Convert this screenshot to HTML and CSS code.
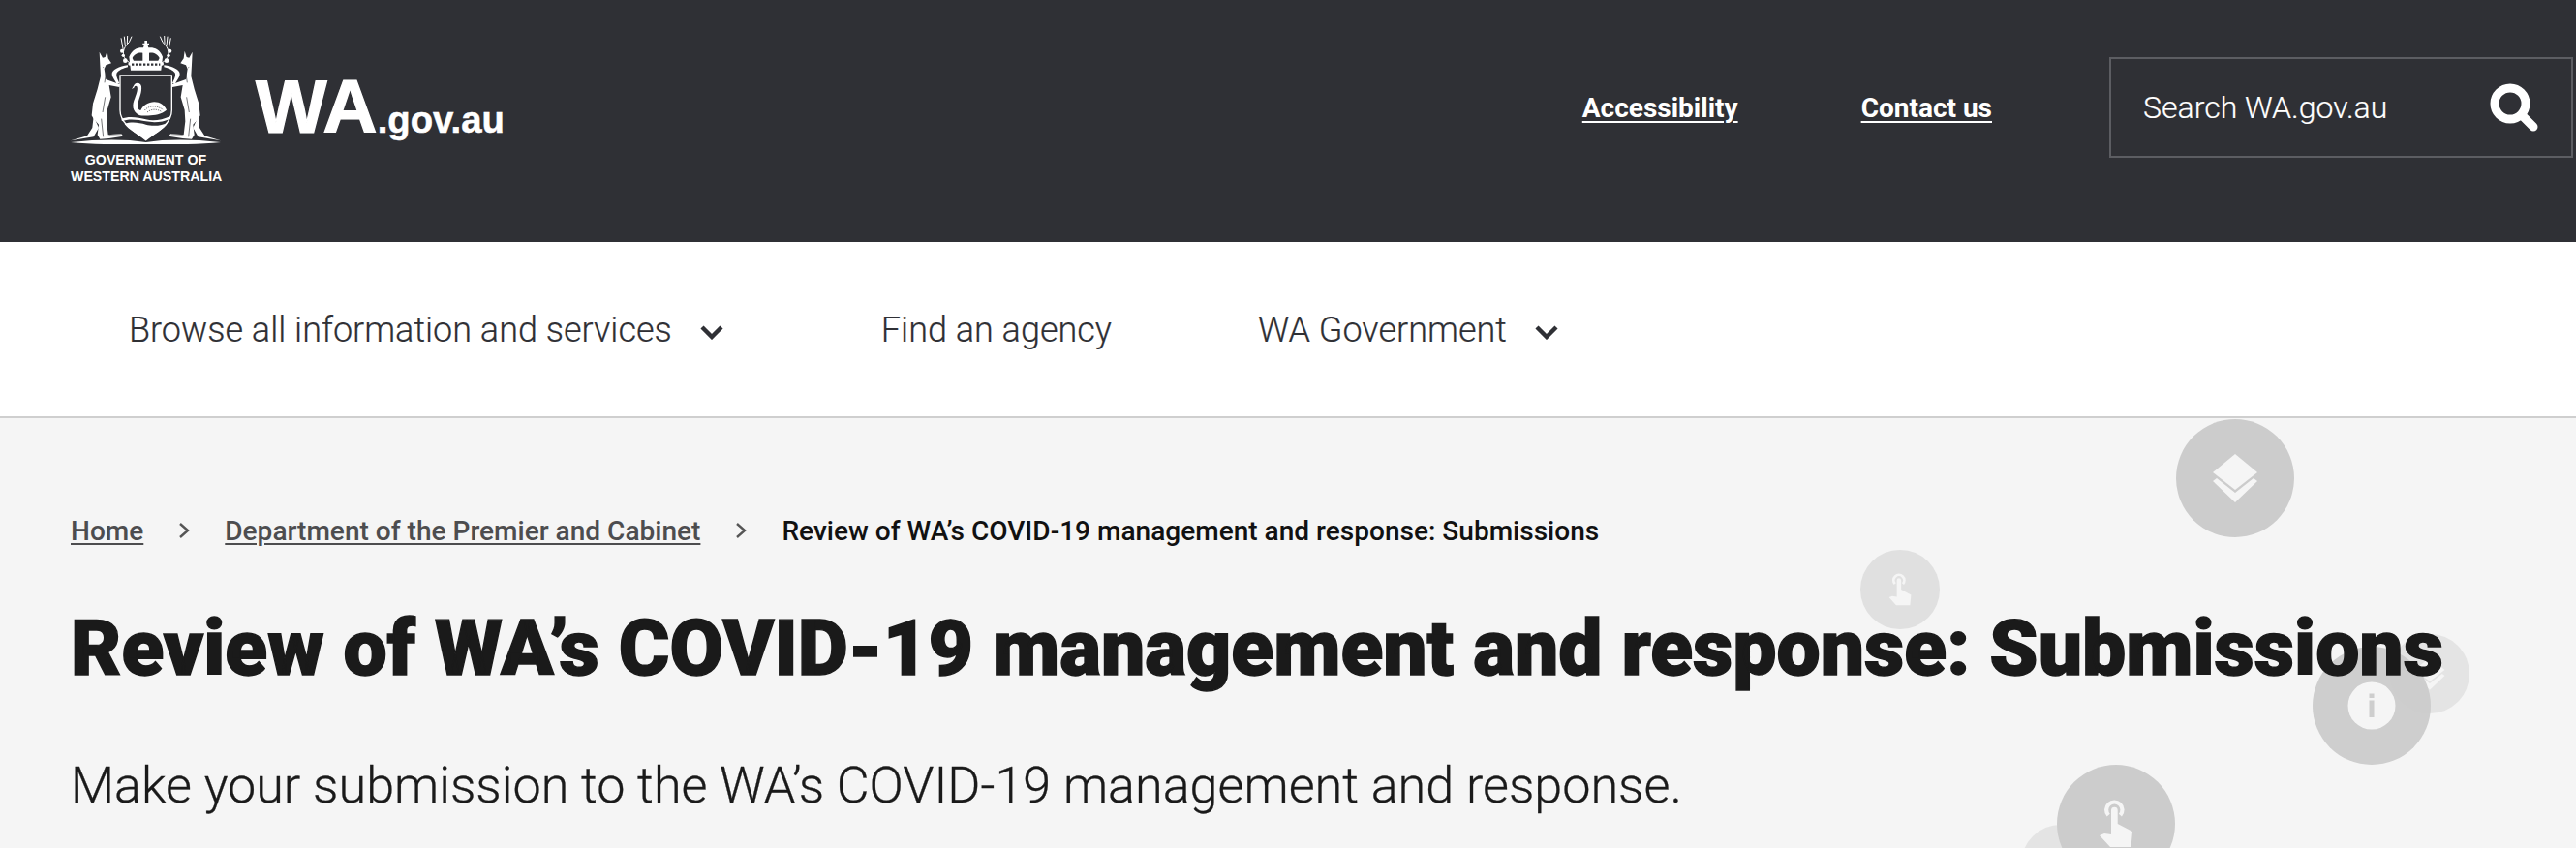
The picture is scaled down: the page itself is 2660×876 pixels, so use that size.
FILE: index.html
```html
<!DOCTYPE html>
<html lang="en">
<head>
<meta charset="utf-8">
<title>Review of WA's COVID-19 management and response: Submissions</title>
<link rel="stylesheet" href="styles.css">
</head>
<body>
<header class="masthead">
  <a class="brand" href="#">
    <span class="crest">
      <svg class="crest-art" viewBox="9 15 465 336" aria-hidden="true">
        <defs>
          <g id="roo">
            <path d="M98 65L108 83 116 81 122 62 125 85 135 100 118 106 113 118 118 150 162 166 160 174 128 168 134 205 122 245 120 280 125 322 165 318 172 326 128 333 100 335 92 322 96 290 80 272 74 262 78 225 92 180 102 140 100 105z" fill="#fff"/>
            <path d="M80 265L96 300 80 328 8 340 60 325 76 300z" fill="#fff"/>
            <path d="M186 106C160 110 135 120 137 135 138 145 148 155 152 165L160 162C155 150 148 140 152 130 158 122 172 115 186 112z" fill="#fff"/>
            <path d="M104 272L110 328M116 205L108 252M120 120L114 160" stroke="#2f3035" stroke-width="2" fill="none"/>
            <path d="M128 322L165 320M108 112l4 2" stroke="#2f3035" stroke-width="1.500" fill="none"/>
          </g>
          <g id="antler">
            <path d="M202 102C168 92 162 60 190 35M172 60L165 22M178 47L175 17M184 40L185 13M190 35L198 17" stroke="#fff" stroke-width="3" fill="none"/>
            <circle cx="168" cy="62" r="6" fill="#fff"/>
            <circle cx="172" cy="76" r="5" fill="#fff"/>
            <circle cx="178" cy="92" r="7" fill="#fff"/>
            <circle cx="192" cy="102" r="5" fill="#fff"/>
          </g>
        </defs>
        <path d="M9 345C100 335 180 335 242 345 304 335 384 335 475 345 400 352 300 353 242 352 180 353 84 352 9 345z" fill="#fff"/>
        <use href="#roo"/>
        <use href="#roo" transform="matrix(-1 0 0 1 484 0)"/>
        <use href="#antler"/>
        <use href="#antler" transform="matrix(-1 0 0 1 484 0)"/>
        <path d="M195 122L190 80C200 55 220 50 234 52L236 45H232V38H238V30H246V38H252V45H248L250 52C265 50 285 55 294 80L289 122z" fill="#fff"/>
        <path d="M200 84C205 70 222 65 232 68V92H204zM284 84C279 70 262 65 252 68V92H280z" fill="#2f3035"/>
        <path d="M198 104H286" stroke="#2f3035" stroke-width="7" stroke-dasharray="7 5" fill="none"/>
        <path d="M162 138H322V245C322 290 270 315 242 338 214 315 162 290 162 245z" fill="#2f3035" stroke="#fff" stroke-width="4"/>
        <path d="M176 288C196 280 222 284 242 290S292 294 310 284C300 305 262 322 242 338 222 322 186 305 176 288z" fill="#fff"/>
        <path d="M166 272C190 262 220 268 242 274S292 276 318 264V272C292 284 264 284 242 280S190 270 168 280z" fill="#fff"/>
        <path d="M198 180L207 165C214 158 226 160 228 172 230 190 222 205 218 222 214 236 218 245 226 246 232 232 250 220 268 220 285 220 300 230 306 245L296 252C280 262 235 266 220 260 200 250 198 230 208 208 214 192 218 180 214 172 210 168 206 172 205 176z" fill="#fff"/>
        <path d="M238 246C250 232 270 228 296 244M246 252C258 242 274 240 290 250" stroke="#2f3035" stroke-width="2" stroke-dasharray="4 3" fill="none"/>
      </svg>
      <span class="crest-name">GOVERNMENT OF<br>WESTERN AUSTRALIA</span>
    </span>
    <span class="wordmark"><span class="wa">WA</span>.gov.au</span>
  </a>
  <div class="utility">
    <a class="util-link" href="#">Accessibility</a>
    <a class="util-link" href="#">Contact us</a>
    <div class="search">
      <span class="search-label">Search WA.gov.au</span>
      <svg class="search-icon" viewBox="0 0 50 50" aria-hidden="true">
        <circle cx="21" cy="21" r="16" fill="none" stroke="#fff" stroke-width="9"/>
        <path d="M33 33l12 12" stroke="#fff" stroke-width="9" stroke-linecap="round"/>
      </svg>
    </div>
  </div>
</header>
<nav class="mainnav">
  <a class="nav-item nav-browse" href="#">Browse all information and services
    <svg class="nav-chev" viewBox="0 0 24 15" aria-hidden="true"><path d="M2 2l10 10L22 2" fill="none" stroke="#2f3035" stroke-width="4.4"/></svg>
  </a>
  <a class="nav-item nav-find" href="#">Find an agency</a>
  <a class="nav-item" href="#">WA Government
    <svg class="nav-chev" viewBox="0 0 24 15" aria-hidden="true"><path d="M2 2l10 10L22 2" fill="none" stroke="#2f3035" stroke-width="4.4"/></svg>
  </a>
</nav>
<main class="content">
  <svg class="defs" aria-hidden="true">
    <defs>
      <g id="i-layers">
        <circle r="61" fill="#ccc"/>
        <path d="M0-25L23-6 0 12-23-6z" fill="#f5f5f5"/>
        <path d="M-23 3l4-3L0 15 19 0l4 3L0 25z" fill="#f5f5f5"/>
      </g>
      <g id="i-hand">
        <circle r="61" fill="#ccc"/>
        <path d="M-7.800-8.800A8.200 8.200 0 1 1 4.400-8.800" fill="none" stroke="#f5f5f5" stroke-width="4.200"/>
        <path d="M-5-14a3.350 3.350 0 0 1 6.700 0V0L17 8 15.500 24H-6L-17 12-12 10-5 11z" fill="#f5f5f5"/>
      </g>
      <g id="i-info">
        <circle r="61" fill="#ccc"/>
        <circle r="24.500" fill="#f5f5f5"/>
        <path d="M-2.500-12.500h5V-8h-5zM-2.500-5.500h5V12h-5z" fill="#ccc"/>
      </g>
    </defs>
  </svg>
  <div class="bubbles" aria-hidden="true">
    <svg class="bubble b-layers" viewBox="-61 -61 122 122"><use href="#i-layers"/></svg>
    <svg class="bubble small faint b-hand-s" viewBox="-61 -61 122 122"><use href="#i-hand"/></svg>
    <svg class="bubble small fainter b-layers-s" viewBox="-61 -61 122 122"><use href="#i-layers"/></svg>
    <svg class="bubble b-info" viewBox="-61 -61 122 122"><use href="#i-info"/></svg>
    <svg class="bubble small fainter b-back" viewBox="-61 -61 122 122"><use href="#i-layers"/></svg>
    <svg class="bubble b-hand" viewBox="-61 -61 122 122"><use href="#i-hand"/></svg>
  </div>
  <ol class="crumbs">
    <li><a href="#">Home</a></li>
    <li class="sep"><svg viewBox="0 0 13 16" aria-hidden="true"><path d="M2 1l8 7-8 7" fill="none" stroke="#555" stroke-width="2.400"/></svg></li>
    <li><a href="#">Department of the Premier and Cabinet</a></li>
    <li class="sep"><svg viewBox="0 0 13 16" aria-hidden="true"><path d="M2 1l8 7-8 7" fill="none" stroke="#555" stroke-width="2.400"/></svg></li>
    <li class="current">Review of WA’s COVID-19 management and response: Submissions</li>
  </ol>
  <h1 class="title">Review of WA’s COVID-19 management and response: Submissions</h1>
  <p class="lead">Make your submission to the WA’s COVID-19 management and response.</p>
</main>
</body>
</html>
```
FILE: styles.css
```css
* { box-sizing: border-box; }
html, body { margin: 0; height: 100%; }
body {
  height: 876px;
  overflow: hidden;
  background: #f5f5f5;
  font-family: Roboto, "Liberation Sans", sans-serif;
  color: #1a1a1a;
}
a { color: inherit; }

.masthead {
  height: 250px;
  background: #2f3035;
  display: flex;
  justify-content: space-between;
  padding: 37px 3px 0 73px;
  color: #fff;
}
.brand { display: flex; text-decoration: none; color: #fff; }
.crest { display: flex; flex-direction: column; width: 155px; }
.crest-art { display: block; width: 155px; height: 112px; }
.crest-name {
  font-family: "Liberation Sans", Arial, sans-serif;
  font-weight: 700;
  font-size: 14.200px;
  line-height: 17px;
  text-align: center;
  white-space: nowrap;
  margin-top: 8px;
}
.wordmark {
  font-family: "Liberation Sans", Arial, sans-serif;
  font-weight: 700;
  font-size: 38.300px;
  margin: 33px 0 0 36px;
  line-height: 80px;
  white-space: nowrap;
  -webkit-text-stroke: .5px #fff;
}
.wa { font-size: 78px; -webkit-text-stroke: 1.2px #fff; }

.utility { display: flex; align-items: flex-start; height: 104px; margin-top: 22px; }
.util-link {
  font-weight: 700;
  font-size: 28px;
  line-height: 106px;
  margin-right: 127px;
  text-decoration-thickness: 2px;
  text-underline-offset: 4px;
}
.util-link + .util-link { margin-right: 121px; }
.search {
  width: 479px;
  height: 104px;
  border: 2px solid #5c5d62;
  display: flex;
  align-items: center;
  justify-content: space-between;
  padding: 0 34px 0 33px;
}
.search-label { font-size: 32px; font-weight: 300; -webkit-text-stroke: .2px #fff; }
.search-icon { width: 50px; height: 50px; }

.mainnav {
  height: 182px;
  background: #fff;
  border-bottom: 2px solid #cfcfcf;
  display: flex;
  align-items: center;
  padding: 2px 0 0 133px;
  color: #2f3035;
}
.nav-item {
  font-size: 36px;
  font-weight: 300;
  text-decoration: none;
  display: flex;
  align-items: center;
  white-space: nowrap;
  -webkit-text-stroke: .2px #2f3035;
}
.nav-chev { width: 24px; height: 15px; margin: 4px 0 0 29px; }
.nav-browse { margin-right: 163px; }
.nav-find { margin-right: 151px; }

.content { position: relative; height: 444px; padding: 0 0 0 73px; overflow: hidden; }
.defs { position: absolute; width: 0; height: 0; }
.bubbles { position: absolute; inset: 0; z-index: 0; }
.bubble { position: absolute; width: 122px; height: 122px; overflow: visible; }
.bubble.small { width: 82px; height: 82px; }
.faint { opacity: .5; }
.fainter { opacity: .4; }
.b-layers { left: 2247px; top: 1px; }
.b-hand-s { left: 1921px; top: 136px; }
.b-layers-s { left: 2468px; top: 223px; }
.b-info { left: 2388px; top: 236px; opacity: .95; }
.b-back { left: 2087px; top: 420px; }
.b-hand { left: 2124px; top: 358px; }

.crumbs {
  position: relative;
  list-style: none;
  margin: 0;
  padding: 0;
  display: flex;
  align-items: center;
  height: 32px;
  margin-top: 100px;
  font-size: 28.060px;
  font-weight: 500;
  color: #4d4d4f;
  white-space: nowrap;
}
.crumbs a { text-underline-offset: 3px; }
.sep { display: flex; margin: 0 35px 0 36px; }
.sep svg { width: 13px; height: 16px; }
.current { color: #111; }
.title {
  position: relative;
  margin: 61px 0 0;
  font-size: 80.400px;
  line-height: 90px;
  font-weight: 900;
  color: #1a1a1a;
  -webkit-text-stroke: 1.4px #1a1a1a;
  white-space: nowrap;
}
.lead {
  position: relative;
  margin: 65px 0 0;
  font-size: 52.100px;
  line-height: 64px;
  font-weight: 300;
  color: #1a1a1a;
  -webkit-text-stroke: .3px #1a1a1a;
  white-space: nowrap;
}
```
